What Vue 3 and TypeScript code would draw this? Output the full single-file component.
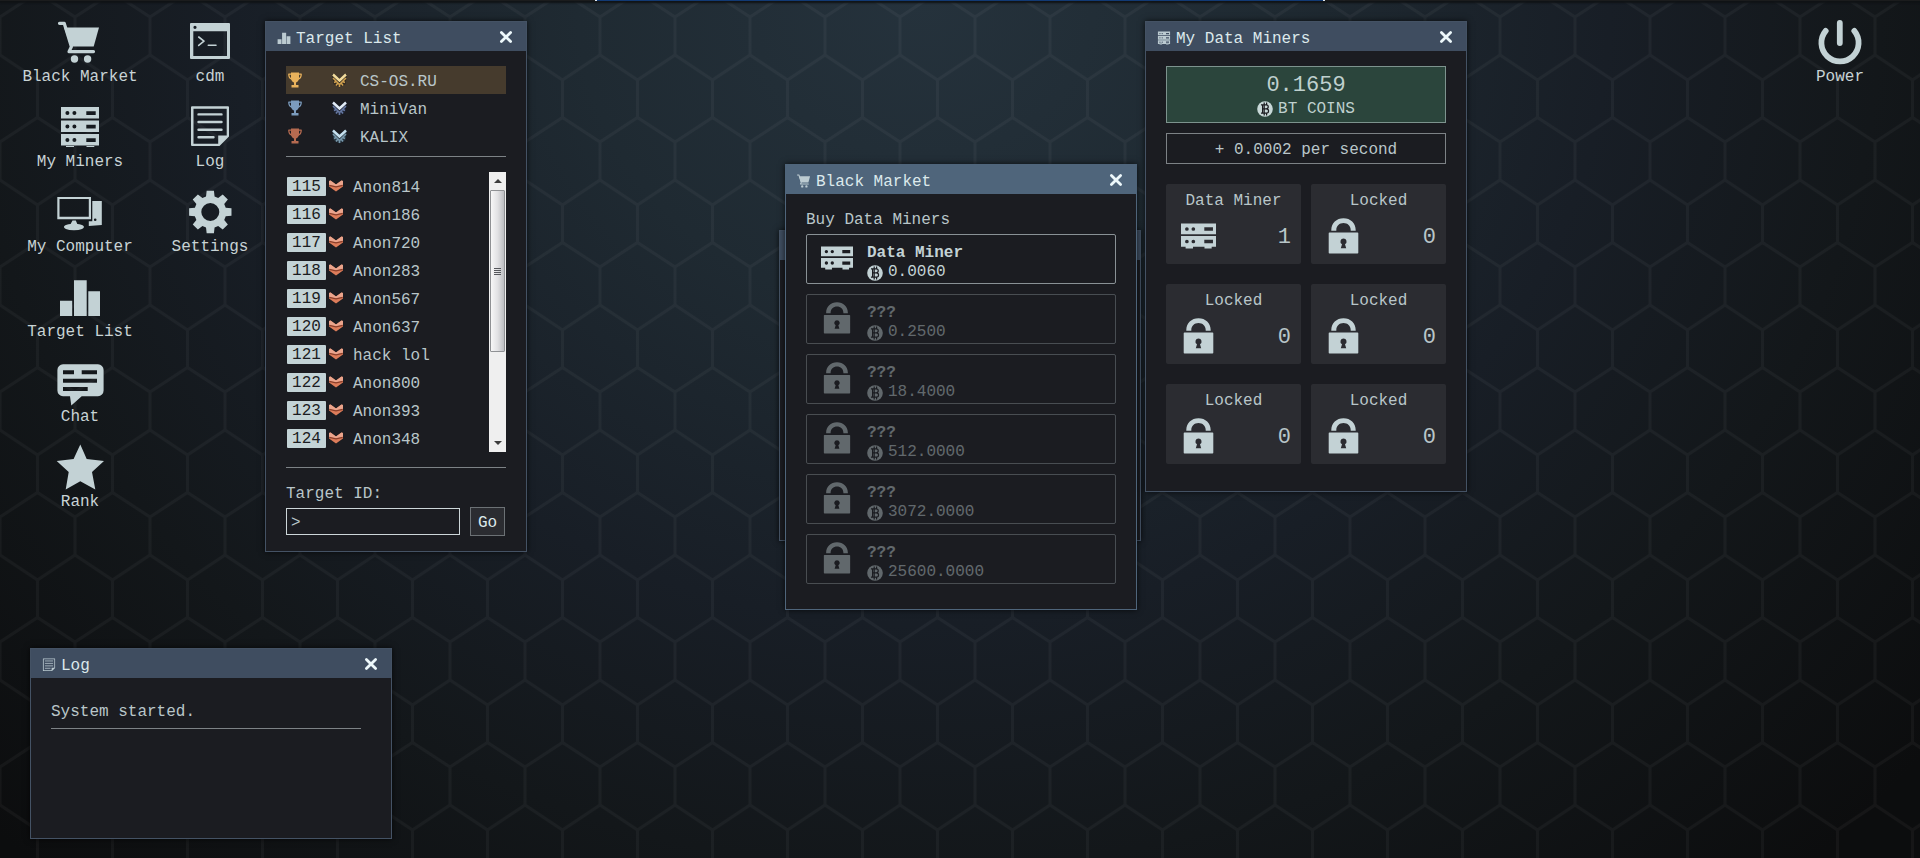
<script setup lang="ts">
import { ref } from 'vue'

interface Shape {
  d: string
  line?: number
  evenodd?: boolean
}
interface Glyph {
  box: string
  shapes: Shape[]
}

const dot = (x: number, y: number, r: number): string =>
  `M${x - r} ${y}a${r} ${r} 0 1 0 ${2 * r} 0a${r} ${r} 0 1 0 ${-2 * r} 0z`

const rackUnit = (y: number): string =>
  `M6 ${y}H44V${y + 11.6}H6zM31.3 ${y + 4.2}V${y + 8}H40.7V${y + 4.2}z${dot(12.4, y + 6, 2)}${dot(19.4, y + 6, 2)}`

const gearPath = (): string => {
  const points: string[] = []
  for (let i = 0; i < 8; i++) {
    const base = (i * Math.PI) / 4
    const corners: [number, number][] = [[-0.27, 16], [-0.17, 21.5], [0.17, 21.5], [0.27, 16]]
    for (const [offset, radius] of corners) {
      const x = 25.3 + radius * Math.sin(base + offset)
      const y = 25 - radius * Math.cos(base + offset)
      points.push(`${x.toFixed(2)} ${y.toFixed(2)}`)
    }
  }
  return `M${points.join('L')}z${dot(25.3, 25, 9)}`
}

const glyphs: Record<string, Glyph> = {
  cart: {
    box: '0 0 50 50',
    shapes: [
      { d: 'M9 10.4H44L38.7 29.6H16z' },
      { d: 'M4.5 6.3H9.2L16.4 29.8L14 34.6H38.5', line: 3.2 },
      { d: dot(19.5, 42, 3.7) + dot(32.6, 42, 3.7) },
    ],
  },
  rack: {
    box: '0 0 50 50',
    shapes: [{ d: rackUnit(5) + rackUnit(18.5) + rackUnit(32) + 'M11 43H19V45H11zM31.5 43H39.3V45H31.5z', evenodd: true }],
  },
  miner: {
    box: '6 5 38 28',
    shapes: [{ d: rackUnit(5.4) + rackUnit(19) + 'M11 30.6H19V32.6H11zM31.5 30.6H39.3V32.6H31.5z', evenodd: true }],
  },
  computer: {
    box: '0 0 50 50',
    shapes: [
      { d: 'M2.3 10H36V32.3H2.3zM4.5 12V29.8H33.8V12z', evenodd: true },
      { d: 'M17.5 33.5H20.8L22.3 37A10 3.2 0 1 1 15.6 37z' },
      { d: 'M37.3 14H46.8V38L33.8 39V34.2H37.3z' + dot(40.2, 32.7, 1.3), evenodd: true },
    ],
  },
  bars: {
    box: '0 0 50 50',
    shapes: [{ d: 'M5 28.7H17.2V44H5zM19 8.3H31.7V44H19zM33.3 19.3H45V44H33.3z' }],
  },
  chat: {
    box: '0 0 50 50',
    shapes: [
      {
        d: 'M8 7.3H43a5.6 5.6 0 0 1 5.6 5.6V33.6a5.6 5.6 0 0 1-5.6 5.6H26.7L16.3 48.4L15 39.2H8a5.6 5.6 0 0 1-5.6-5.6V12.9A5.6 5.6 0 0 1 8 7.3zM8 13.3V17.3H19V13.3zM26.7 13.3V17.3H42V13.3zM8 21.7V25.7H42V21.7zM8 30V34H32.7V30z',
        evenodd: true,
      },
    ],
  },
  star: {
    box: '0 0 50 50',
    shapes: [{ d: 'M25.3 2.5L31.7 17L49 19L37 30L40.3 47.4L25.3 39.3L10.7 47.4L13.7 30L1.7 19L18.6 17z' }],
  },
  terminal: {
    box: '0 0 50 50',
    shapes: [
      { d: 'M6 6H44a1 1 0 0 1 1 1V41a1 1 0 0 1-1 1H6a1 1 0 0 1-1-1V7a1 1 0 0 1 1-1zM8.3 14.3V39H42V14.3z' + dot(10, 10.3, 1.6), evenodd: true },
      { d: 'M13.7 20L19 24.2L13.7 28.4M23.3 28.2H31', line: 1.6 },
    ],
  },
  note: {
    box: '0 0 50 50',
    shapes: [
      { d: 'M7 4.3H43a1 1 0 0 1 1 1V34.5L34.5 44H7a1 1 0 0 1-1-1V5.3a1 1 0 0 1 1-1zM8.5 6.8V41.7H33.2V33.5H41.7V6.8z', evenodd: true },
      { d: 'M13.5 12.4H36.5M13.5 20H36.5M13.5 27.7H36.5M13.5 35.3H28.5', line: 2.4 },
    ],
  },
  gear: { box: '0 0 50 50', shapes: [{ d: gearPath(), evenodd: true }] },
  power: {
    box: '0 0 50 50',
    shapes: [{ d: 'M10.7 13.9A18.6 18.6 0 1 0 39.3 13.9M24.8 6V26', line: 5.8 }],
  },
  lock: {
    box: '0 0 30 36',
    shapes: [
      { d: 'M2.800 12.700V12C2.800 5 8 .2 15 .2S27.200 5 27.200 12V12.700H22.200V12C22.200 7.800 19 5 15 5S7.800 7.800 7.800 12V12.700z' },
      {
        d: 'M1 14.5H29a.8 .8 0 0 1 .8 .8V34.7a.8 .8 0 0 1-.8 .8H1a.8 .8 0 0 1-.8-.8V15.3a.8 .8 0 0 1 .8-.8zM15 20.4a3.1 3.1 0 0 0-1.5 5.8L12.3 30.2H17.7L16.5 26.2A3.1 3.1 0 0 0 15 20.4z',
        evenodd: true,
      },
    ],
  },
  trophy: {
    box: '0 0 14 16',
    shapes: [
      { d: 'M3 .5H11V6C11 8.8 9.4 10 8 10.4V13H10.5V15.5H3.5V13H6V10.4C4.6 10 3 8.8 3 6z' },
      { d: 'M3 2.2H.8C.8 4.8 1.8 6.6 3.8 7M11 2.2H13.2C13.2 4.8 12.2 6.6 10.2 7', line: 1.3 },
    ],
  },
  close: { box: '0 0 14 14', shapes: [{ d: 'M2.4 2.4L11.6 11.6M11.6 2.4L2.4 11.6', line: 2.8 }] },
}

interface Shortcut {
  glyph: string
  label: string
}
const shortcutColumns: Shortcut[][] = [
  [
    { glyph: 'cart', label: 'Black Market' },
    { glyph: 'rack', label: 'My Miners' },
    { glyph: 'computer', label: 'My Computer' },
    { glyph: 'bars', label: 'Target List' },
    { glyph: 'chat', label: 'Chat' },
    { glyph: 'star', label: 'Rank' },
  ],
  [
    { glyph: 'terminal', label: 'cdm' },
    { glyph: 'note', label: 'Log' },
    { glyph: 'gear', label: 'Settings' },
  ],
]

const leaders = [
  { name: 'CS-OS.RU', tier: 'gold' },
  { name: 'MiniVan', tier: 'silver' },
  { name: 'KALIX', tier: 'bronze' },
]

const targets = ['Anon814', 'Anon186', 'Anon720', 'Anon283', 'Anon567', 'Anon637', 'hack lol', 'Anon800', 'Anon393', 'Anon348'].map(
  (name, index) => ({ id: 115 + index, name }),
)

const offers = [
  { name: 'Data Miner', price: '0.0060', locked: false },
  { name: '???', price: '0.2500', locked: true },
  { name: '???', price: '18.4000', locked: true },
  { name: '???', price: '512.0000', locked: true },
  { name: '???', price: '3072.0000', locked: true },
  { name: '???', price: '25600.0000', locked: true },
]

const miners = [
  { name: 'Data Miner', count: 1 },
  { name: 'Locked', count: 0 },
  { name: 'Locked', count: 0 },
  { name: 'Locked', count: 0 },
  { name: 'Locked', count: 0 },
  { name: 'Locked', count: 0 },
]

const targetId = ref('>')
</script>

<template>
  <main class="desktop">
    <svg class="defs" aria-hidden="true">
      <defs>
        <symbol v-for="(glyph, name) in glyphs" :id="`g-${name}`" :key="name" :viewBox="glyph.box">
          <path
            v-for="(shape, i) in glyph.shapes"
            :key="i"
            :d="shape.d"
            :fill="shape.line ? 'none' : 'currentColor'"
            :fill-rule="shape.evenodd ? 'evenodd' : 'nonzero'"
            :stroke="shape.line ? 'currentColor' : 'none'"
            :stroke-width="shape.line ?? 0"
            stroke-linecap="round"
            stroke-linejoin="round"
          />
        </symbol>
        <symbol id="g-coin" viewBox="0 0 16 16">
          <circle cx="8" cy="8" r="7.8" fill="currentColor" />
          <path
            class="coin-mark"
            d="M4 3.8H9.2A2 2 0 0 1 9.2 7.9H5.6M9.4 7.9A2.1 2.1 0 0 1 9.4 12.2H4M5.6 3.8V12.200M7.200 1.400V14.600M9.600 1.400V3.800M9.600 12.200V14.600"
            fill="none"
            stroke-width="1.2"
          />
        </symbol>
        <symbol id="g-chevron" viewBox="0 0 14 12">
          <path d="M0 1L1.5 .5L7 4.5L12.5 .5L14 1V6.5L7 11.5L0 6.5z" fill="#dc7c5a" />
          <path d="M0 1L1.5 .5L7 4.5L12.5 .5L14 1V5L7 6.5L0 5z" fill="#eba58d" />
          <path d="M.3 5.3L7 6.8L13.700 5.300" fill="none" stroke="#8b3f2b" stroke-width="1.2" />
        </symbol>
        <symbol id="g-emblem" viewBox="0 0 15 15">
          <path class="emblem-shade" d="M0 1L7.5 5L15 1L13.5 11L7.5 14.5L1.5 11z" />
          <path class="emblem-trim" d="M1 5L7.5 11.5L14 5M2 9.500L4.500 8.500M13 9.500L10.500 8.500M4 12.500L5.500 10.500M11 12.500L9.500 10.500M7.500 11V14" fill="none" stroke-width="1.6" />
          <path class="emblem-wing" d="M1 1.5L7.5 7.5L14 1.5" fill="none" stroke-width="2.4" />
        </symbol>
        <pattern id="hexes" width="75" height="125" patternUnits="userSpaceOnUse">
          <path
            d="M0 17V55L37.5 80V117.5L0 142M75 17V55L37.5 80M37.5 117.5L75 142M0 17L37.5 -7.5L75 17"
            fill="none"
            stroke="#fff"
            stroke-opacity=".038"
            stroke-width="3"
          />
        </pattern>
      </defs>
    </svg>
    <svg class="wallpaper" aria-hidden="true"><rect width="100%" height="100%" fill="url(#hexes)" /></svg>
    <div class="top-edge"></div>

    <nav class="shortcuts" aria-label="Programs">
      <div v-for="(column, c) in shortcutColumns" :key="c" class="shortcut-column">
        <button v-for="item in column" :key="item.label" type="button" class="shortcut">
          <svg><use :href="`#g-${item.glyph}`" /></svg>
          <span>{{ item.label }}</span>
        </button>
      </div>
      <button type="button" class="shortcut power">
        <svg><use href="#g-power" /></svg>
        <span>Power</span>
      </button>
    </nav>

    <section class="window target-window" aria-label="Target List">
      <header class="title-bar">
        <svg class="title-icon"><use href="#g-bars" /></svg>
        <h2>Target List</h2>
        <button type="button" class="close" aria-label="Close"><svg><use href="#g-close" /></svg></button>
      </header>
      <div class="body">
        <ol class="leaders">
          <li v-for="leader in leaders" :key="leader.name" :class="leader.tier">
            <svg class="trophy"><use href="#g-trophy" /></svg>
            <svg class="emblem"><use href="#g-emblem" /></svg>
            <span class="name">{{ leader.name }}</span>
          </li>
        </ol>
        <hr />
        <div class="scroller">
          <ul class="targets">
            <li v-for="target in targets" :key="target.id">
              <span class="badge">{{ target.id }}</span>
              <svg class="chevron"><use href="#g-chevron" /></svg>
              <span class="name">{{ target.name }}</span>
            </li>
          </ul>
          <div class="scrollbar" aria-hidden="true">
            <span class="arrow up"></span>
            <span class="thumb"><i></i><i></i><i></i><i></i></span>
            <span class="track"></span>
            <span class="arrow down"></span>
          </div>
        </div>
        <hr class="footer-rule" />
        <label for="target-id">Target ID:</label>
        <form class="target-form" @submit.prevent>
          <input id="target-id" v-model="targetId" type="text" autocomplete="off" />
          <button type="submit">Go</button>
        </form>
      </div>
    </section>

    <section class="window back-window" aria-hidden="true">
      <header class="title-bar"></header>
    </section>

    <section class="window active market-window" aria-label="Black Market">
      <header class="title-bar">
        <svg class="title-icon"><use href="#g-cart" /></svg>
        <h2>Black Market</h2>
        <button type="button" class="close" aria-label="Close"><svg><use href="#g-close" /></svg></button>
      </header>
      <div class="body">
        <h3>Buy Data Miners</h3>
        <div class="offers">
          <button v-for="offer in offers" :key="offer.price" type="button" class="offer" :class="{ locked: offer.locked }">
            <svg class="offer-icon"><use :href="offer.locked ? '#g-lock' : '#g-miner'" /></svg>
            <span class="offer-text">
              <strong>{{ offer.name }}</strong>
              <span class="price"><svg class="coin"><use href="#g-coin" /></svg>{{ offer.price }}</span>
            </span>
          </button>
        </div>
      </div>
    </section>

    <section class="window miners-window" aria-label="My Data Miners">
      <header class="title-bar">
        <svg class="title-icon"><use href="#g-rack" /></svg>
        <h2>My Data Miners</h2>
        <button type="button" class="close" aria-label="Close"><svg><use href="#g-close" /></svg></button>
      </header>
      <div class="body">
        <div class="balance">
          <span class="figure">0.1659</span>
          <span class="unit"><svg class="coin"><use href="#g-coin" /></svg>BT COINS</span>
        </div>
        <p class="rate">+ 0.0002 per second</p>
        <ul class="miner-grid">
          <li v-for="(miner, i) in miners" :key="i">
            <span>{{ miner.name }}</span>
            <div class="miner-row">
              <svg><use :href="miner.count ? '#g-miner' : '#g-lock'" /></svg>
              <span class="figure">{{ miner.count }}</span>
            </div>
          </li>
        </ul>
      </div>
    </section>

    <section class="window log-window" aria-label="Log">
      <header class="title-bar">
        <svg class="title-icon"><use href="#g-note" /></svg>
        <h2>Log</h2>
        <button type="button" class="close" aria-label="Close"><svg><use href="#g-close" /></svg></button>
      </header>
      <div class="body">
        <p class="log-line">System started.</p>
      </div>
    </section>
  </main>
</template>

<style>
body {
  margin: 0;
  background: #0b0c0e;
}
</style>

<style scoped>
.desktop {
  position: relative;
  min-height: 100vh;
  overflow: hidden;
  box-sizing: border-box;
  padding: 17px 15px;
  background: radial-gradient(ellipse 64% 130% at 48% 0%, #25323c 0%, #1f2a32 28%, #181e26 56%, #13171a 78%, #0c0d0e 106%);
  color: #b9c6c9;
  font-family: 'Liberation Mono', 'DejaVu Sans Mono', monospace;
  font-size: 16px;
  line-height: 20px;
}
.desktop *,
.desktop *::before {
  box-sizing: border-box;
}
h2,
h3,
p,
ol,
ul {
  margin: 0;
  padding: 0;
  font-size: 16px;
  font-weight: 400;
  list-style: none;
}
button,
input {
  font: inherit;
  color: inherit;
  margin: 0;
  padding: 0;
  border: 0;
  background: none;
}
svg {
  display: block;
  flex: none;
}
.defs {
  position: absolute;
  width: 0;
  height: 0;
}
.wallpaper {
  position: absolute;
  inset: 0;
  width: 100%;
  height: 100%;
}
.top-edge {
  position: absolute;
  inset: 0 0 auto;
  height: 1px;
  background: linear-gradient(90deg, #1b1c1d 31%, #dfe6ee 31% 31.1%, #123a74 31.1% 68.9%, #dfe6ee 68.9% 69%, #1b1c1d 69%);
  box-shadow: 0 1px 2px 1px #0f1215;
}
.coin-mark {
  stroke: #1b1c21;
}
.balance .coin {
  color: #c8d8d8;
}

.shortcuts {
  position: relative;
  display: flex;
  align-items: flex-start;
}
.shortcut-column {
  display: flex;
  flex-direction: column;
  gap: 15px;
}
.shortcut {
  display: flex;
  flex-direction: column;
  align-items: center;
  width: 130px;
  color: #c8d3d5;
}
.shortcut svg {
  width: 50px;
  height: 50px;
  color: #c3d2d5;
}
.power {
  margin-left: auto;
}

.window {
  position: absolute;
  border: 1px solid #445264;
  background: #1b1c21;
  box-shadow: 0 0 6px rgba(0, 0, 0, 0.7);
}
.title-bar {
  display: flex;
  align-items: flex-start;
  gap: 4px;
  height: 29px;
  padding: 8px 13px 3px 10px;
  background: #3f4d60;
  color: #dce9ec;
  line-height: 18px;
}
.title-icon {
  width: 16px;
  height: 16px;
  color: #bccbd1;
}
.close {
  margin-left: auto;
}
.close svg {
  width: 14px;
  height: 14px;
  color: #edf8fb;
}
.body {
  padding: 15px 20px;
}
.active {
  border-color: #4f657b;
}
.active .title-bar {
  background: #4f657b;
}
hr {
  height: 1px;
  margin: 6px 0 15px;
  border: 0;
  background: #7d8286;
}

.target-window {
  left: 265px;
  top: 21px;
  width: 262px;
}
.leaders li {
  display: flex;
  align-items: center;
  height: 28px;
  padding-left: 2px;
}
.leaders .gold {
  background: #463b2d;
}
.name {
  padding-top: 3px;
}
.trophy {
  width: 14px;
  height: 16px;
}
.emblem {
  width: 15px;
  height: 15px;
  margin: 0 13px 0 30px;
}
.gold .trophy {
  color: #e9b25c;
}
.silver .trophy {
  color: #7b9bbd;
}
.bronze .trophy {
  color: #b56a50;
}
.emblem {
  --shade: #2c2620;
  --wing: #f3dc9b;
  --trim: #cfa04f;
}
.silver .emblem {
  --shade: #1d2230;
  --wing: #e3edf8;
  --trim: #6577a0;
}
.bronze .emblem {
  --shade: #26343f;
  --wing: #c6e0ef;
  --trim: #7797ab;
}
.emblem-shade {
  fill: var(--shade);
}
.emblem-wing {
  stroke: var(--wing);
}
.emblem-trim {
  stroke: var(--trim);
}
.scroller {
  display: flex;
}
.targets {
  flex: 1;
}
.targets li {
  display: flex;
  align-items: center;
  height: 28px;
  padding-left: 1px;
}
.badge {
  width: 39px;
  height: 19px;
  border-radius: 1px;
  background: #c3d3d6;
  color: #1b1c21;
  text-align: center;
}
.chevron {
  width: 14px;
  height: 12px;
  margin: 0 10px 0 3px;
}
.scrollbar {
  display: flex;
  flex-direction: column;
  width: 17px;
  background: #efefef;
}
.arrow {
  display: grid;
  place-items: center;
  height: 18px;
}
.arrow::before {
  content: '';
  border: 4px solid transparent;
}
.up::before {
  border-top-width: 0;
  border-bottom-color: #3c3c3c;
}
.down::before {
  border-bottom-width: 0;
  border-top-color: #3c3c3c;
}
.thumb {
  display: flex;
  flex-direction: column;
  align-items: center;
  justify-content: center;
  gap: 1px;
  height: 162px;
  margin: 0 1px;
  border: 1px solid #8f9194;
  border-radius: 1px;
  background: linear-gradient(90deg, #f7f7f7, #e2e2e4 50%, #bdbec2);
}
.thumb i {
  width: 7px;
  height: 1px;
  background: #55575b;
}
.track {
  flex: 1;
}
.footer-rule {
  margin: 15px 0 16px;
}
label {
  display: block;
}
.target-form {
  display: flex;
  align-items: center;
  gap: 10px;
  margin-top: 3px;
}
.target-form input {
  flex: 1;
  min-width: 0;
  height: 27px;
  padding: 2px 4px 0;
  border: 1px solid #cdd6d9;
}
.target-form button {
  width: 35px;
  height: 29px;
  margin-right: 1px;
  padding-top: 2px;
  border: 1px solid #6c7175;
  background: #2b2c31;
  color: #dce9ec;
}

.back-window {
  left: 779px;
  top: 230px;
  width: 362px;
  height: 311px;
}

.market-window {
  left: 785px;
  top: 164px;
  width: 352px;
}
.market-window .body {
  padding: 16px 20px 25px;
}
.offers {
  display: flex;
  flex-direction: column;
  gap: 10px;
  margin-top: 4px;
}
.offer {
  display: flex;
  align-items: center;
  gap: 14px;
  height: 50px;
  padding: 0 14px;
  border: 1px solid #899195;
  border-radius: 2px;
  color: #c3d2d5;
  text-align: left;
}
.offer.locked {
  opacity: 0.42;
}
.offer-icon {
  width: 32px;
  height: 32px;
  margin-bottom: 2px;
}
.offer-text {
  padding-top: 8px;
  line-height: 19px;
}
.offer-text strong {
  display: block;
}
.price,
.unit {
  display: flex;
  align-items: center;
  gap: 5px;
}
.coin {
  width: 16px;
  height: 16px;
}

.miners-window {
  left: 1145px;
  top: 21px;
  width: 322px;
}
.miners-window .body {
  padding-bottom: 27px;
}
.figure {
  font-size: 22px;
  line-height: 26px;
}
.balance {
  display: flex;
  flex-direction: column;
  align-items: center;
  padding: 6px 0 3px;
  border: 1px solid #7d938e;
  background: #2b453c;
  color: #bfd0ce;
}
.rate {
  margin-top: 10px;
  padding: 6px 0 3px;
  border: 1px solid #7d8286;
  text-align: center;
}
.miner-grid {
  display: grid;
  grid-template-columns: 1fr 1fr;
  gap: 20px 10px;
  margin-top: 20px;
}
.miner-grid li {
  height: 80px;
  padding: 7px 10px 2px 15px;
  border-radius: 2px;
  background: #2b2c31;
}
.miner-grid li > span {
  display: block;
  margin-left: -5px;
  text-align: center;
}
.miner-row {
  display: flex;
  align-items: center;
  justify-content: space-between;
  height: 51px;
}
.miner-row svg {
  width: 35px;
  height: 36px;
  margin-bottom: 2px;
  color: #c3d2d5;
}
.miner-row .figure {
  padding-top: 2px;
}

.log-window {
  left: 30px;
  top: 648px;
  width: 362px;
  min-height: 191px;
}
.log-line {
  margin-right: 10px;
  padding: 9px 0 6px;
  border-bottom: 1px solid #7d8286;
}
</style>
